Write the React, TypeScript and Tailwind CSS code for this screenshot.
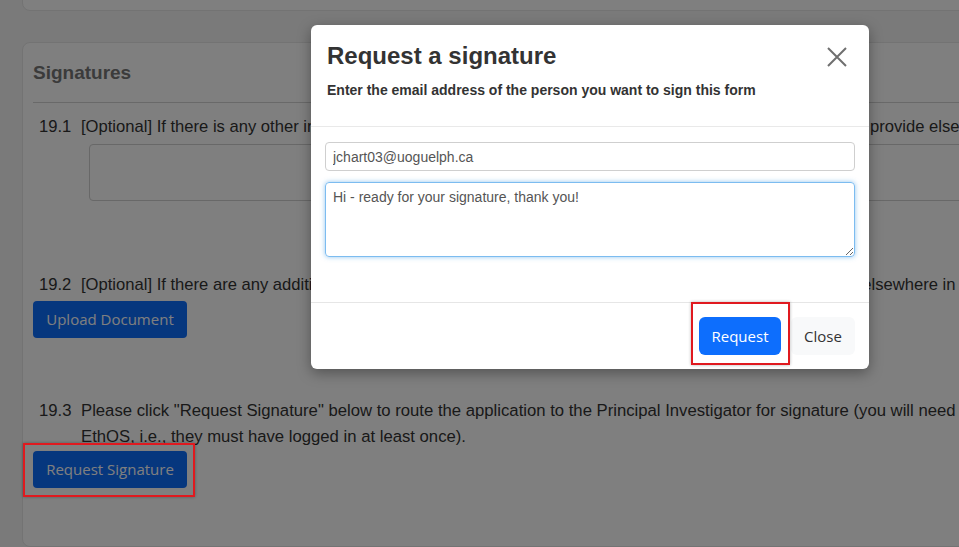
import React from 'react';

const body = { fontFamily: '"Liberation Sans", Arial, sans-serif' };
const btn = { fontFamily: '"Open Sans", "Noto Sans", sans-serif' };

function PageBehind() {
  return (
    <div className="flex flex-col gap-[31px] pl-[22px]" style={body}>
      {/* end of the previous card */}
      <div className="-mt-[20px] h-[31px] w-[1000px] rounded-b-[8px] border border-[#e6e6e6] bg-white" />

      <div className="w-[1000px] h-[505px] rounded-[8px] border border-[#e6e6e6] bg-white px-[10px]">
        <h2 className="pt-[16px] pb-[14px] text-[19px] font-bold text-[#777]">Signatures</h2>
        <div className="border-t border-[#d2d2d2]" />

        <div className="mt-[12px] flex whitespace-nowrap text-[16.6px] leading-[24px] text-[#333]">
          <span className="w-[48px] shrink-0 pl-[6px]">19.1</span>
          <span>[Optional] If there is any other information relevant to this application that you would like to include but can't provide elsewhere in the form</span>
        </div>
        <div className="ml-[56px] mt-[5px] h-[57px] w-[880px] rounded-[4px] border border-[#d0d0d0] bg-white" />

        <div className="mt-[72px] flex whitespace-nowrap text-[16.6px] leading-[24px] text-[#333]">
          <span className="w-[48px] shrink-0 pl-[6px]">19.2</span>
          <span>[Optional] If there are any additional documents that you would like to submit that have not been uploaded elsewhere in the application</span>
        </div>
        <button className="mt-[4px] h-[37px] w-[154px] rounded-[4px] bg-[#0d6efd] text-[15px] text-white" style={btn}>
          Upload Document
        </button>

        <div className="mt-[60px] flex text-[16.7px] leading-[26px] text-[#333]">
          <span className="w-[48px] shrink-0 pl-[6px]">19.3</span>
          <span className="whitespace-nowrap">
            Please click "Request Signature" below to route the application to the Principal Investigator for signature (you will need to ensure they have an account in
            <br />
            EthOS, i.e., they must have logged in at least once).
          </span>
        </div>
        <button className="mt-[1px] h-[37px] w-[154px] rounded-[4px] bg-[#0d6efd] text-[15px] text-white" style={btn}>
          Request Signature
        </button>
      </div>
    </div>
  );
}

function SignatureModal() {
  return (
    <div className="absolute left-[311px] top-[25px] w-[558px] rounded-[6px] bg-white shadow-[0_4px_14px_rgba(0,0,0,0.35)]" style={body}>
      <div className="relative h-[102px] border-b border-[#e9e9e9] px-[16px] pt-[16px]">
        <h3 className="text-[24px] font-bold leading-[30px] text-[#333]">Request a signature</h3>
        <p className="mt-[9px] text-[14px] font-bold text-[#333]">Enter the email address of the person you want to sign this form</p>
        <button className="absolute right-[20px] top-[20px] h-[24px] w-[24px]">
          <svg viewBox="0 0 24 24" className="h-[24px] w-[24px]">
            <path d="M3 3 L21 21 M21 3 L3 21" stroke="#6f6f6f" strokeWidth="2" fill="none" />
          </svg>
        </button>
      </div>

      <div className="flex h-[175px] flex-col gap-[11px] px-[14px] pt-[15px]">
        <input
          readOnly
          value="jchart03@uoguelph.ca"
          className="h-[29px] w-full rounded-[4px] border border-[#cfcfcf] px-[7px] text-[14px] text-[#555] outline-none"
        />
        <textarea
          readOnly
          defaultValue="Hi - ready for your signature, thank you!"
          className="h-[75px] w-full rounded-[4px] border border-[#7cbcf0] px-[7px] py-[4px] text-[14px] text-[#555] shadow-[0_0_5px_rgba(102,175,233,0.7)] outline-none"
        />
      </div>

      <div className="flex h-[67px] items-start justify-end gap-[10px] border-t border-[#e6e6e6] pr-[14px] pt-[14px]">
        <button className="h-[38px] w-[82px] rounded-[6px] bg-[#0d6efd] text-[15px] text-white" style={btn}>
          Request
        </button>
        <button className="h-[38px] w-[64px] rounded-[6px] bg-[#f8f9fa] text-[15px] text-[#333]" style={btn}>
          Close
        </button>
      </div>
    </div>
  );
}

export default function App() {
  return (
    <div className="relative h-[547px] w-[959px] overflow-hidden bg-[#f4f4f4]">
      <PageBehind />

      {/* backdrop */}
      <div className="absolute inset-0 bg-black/50" />

      <SignatureModal />

      {/* red annotation boxes */}
      <div className="absolute left-[23px] top-[443px] h-[54px] w-[172px] border-2 border-[#e0191f] shadow-[0_0_3px_rgba(0,0,0,0.3)]" />
      <div className="absolute left-[691px] top-[302px] h-[63px] w-[99px] border-2 border-[#e0191f] shadow-[0_0_3px_rgba(0,0,0,0.3)]" />
    </div>
  );
}
